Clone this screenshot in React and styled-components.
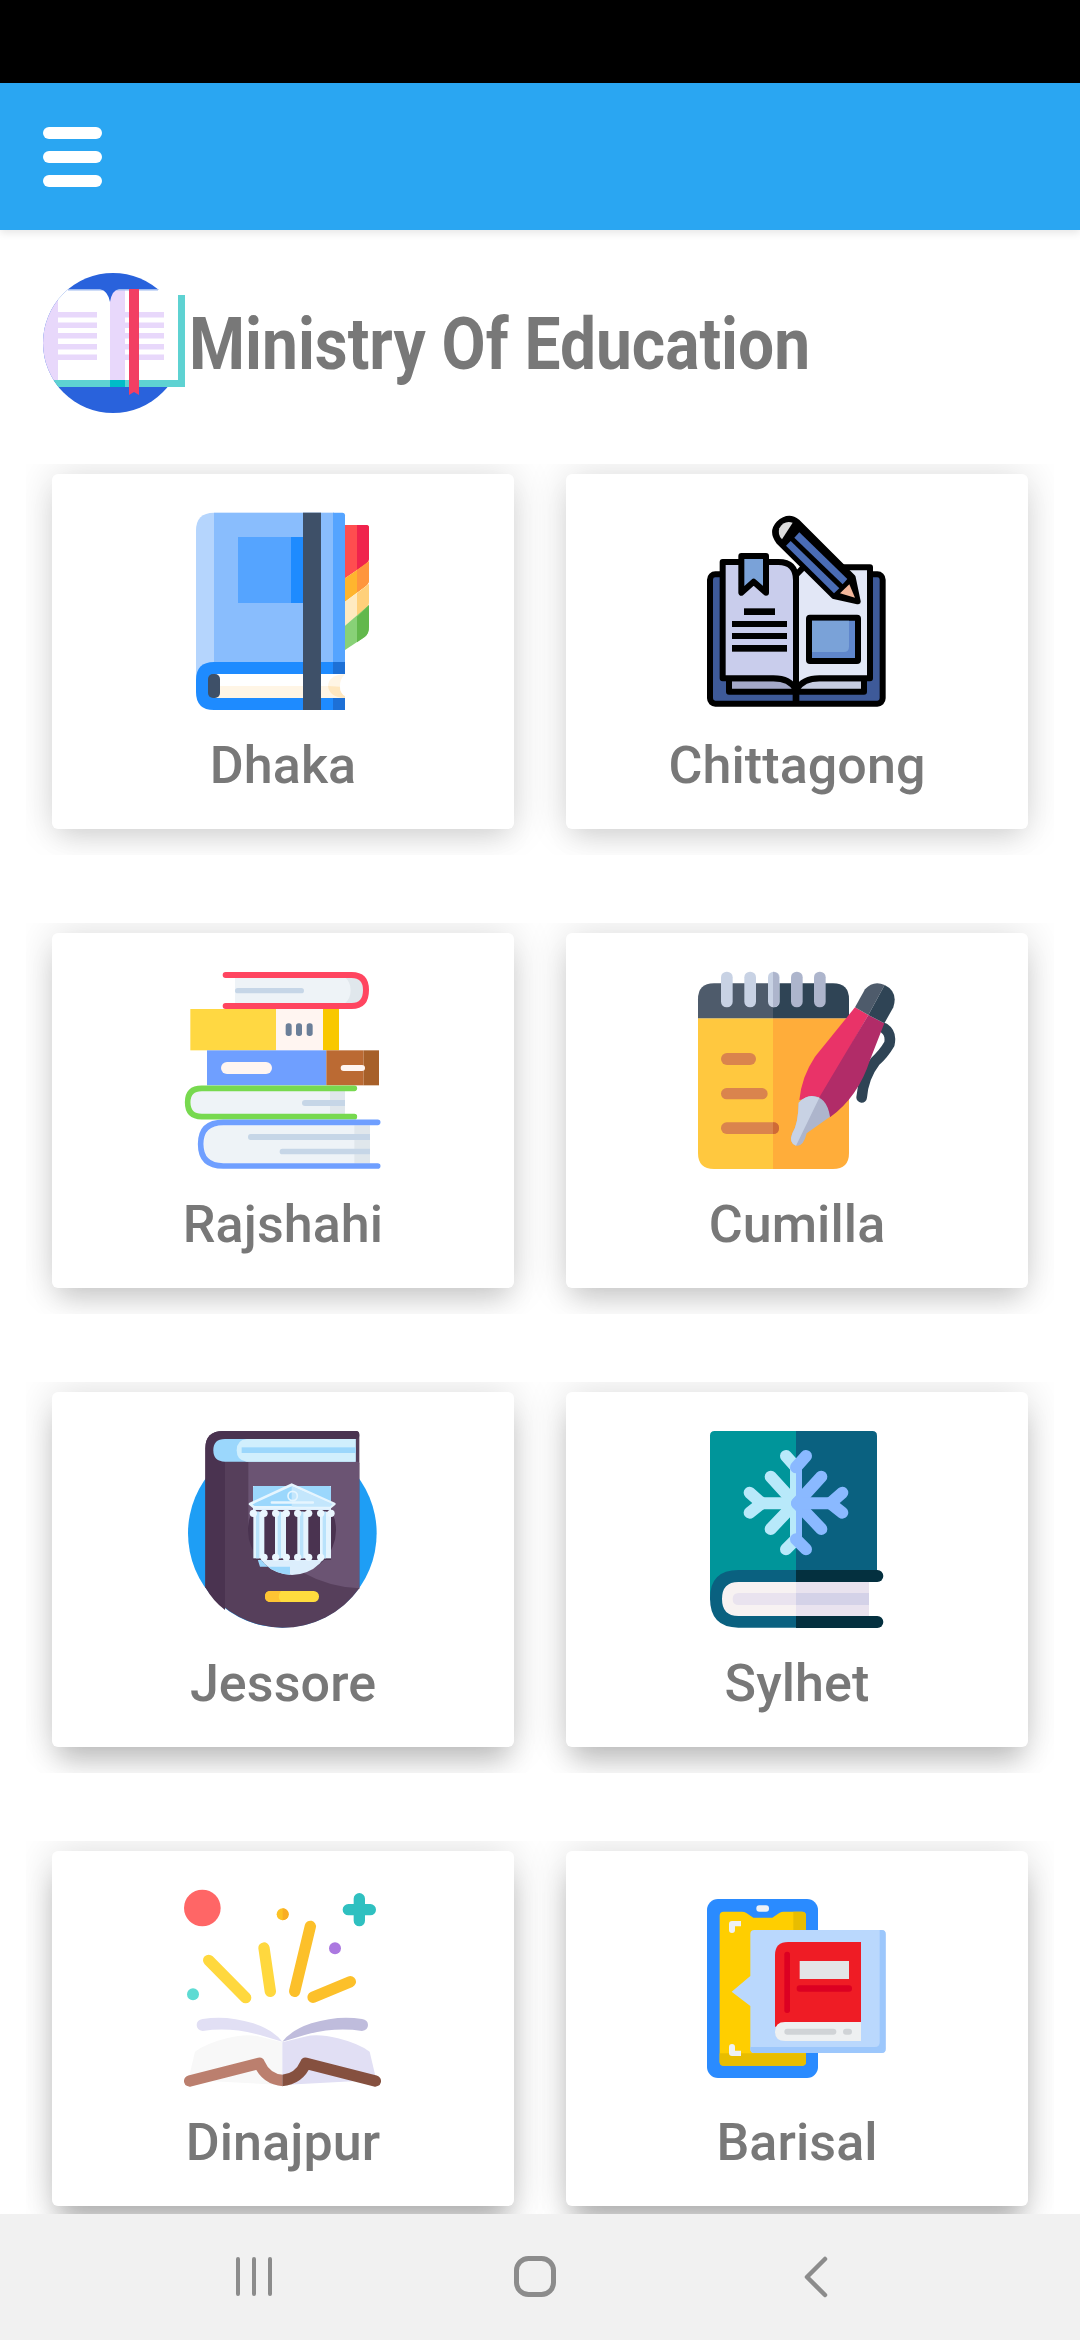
import React from "react";
import styled, { createGlobalStyle } from "styled-components";

const Global = createGlobalStyle`
  html, body { margin: 0; padding: 0; background: #fff; }
  #root { width: 1080px; height: 2340px; }
  * { box-sizing: border-box; }
`;

const Page = styled.div`
  width: 1080px;
  height: 2340px;
  display: flex;
  flex-direction: column;
  overflow: hidden;
  background: #fff;
  font-family: Roboto, "Liberation Sans", sans-serif;
`;
const StatusBar = styled.div`
  height: 83px;
  flex: none;
  background: #000;
`;
const AppBar = styled.header`
  height: 147px;
  flex: none;
  background: #2aa6f2;
  padding-left: 43px;
  display: flex;
  align-items: center;
  position: relative;
  z-index: 1;
  box-shadow: 0 3px 8px rgba(0, 0, 0, 0.1);
`;
const Burger = styled.div`
  display: flex;
  flex-direction: column;
  gap: 12px;
`;
const BurgerBar = styled.span`
  display: block;
  width: 59px;
  height: 12px;
  border-radius: 6px;
  background: #fff;
`;
const Content = styled.main`
  flex: 1;
  min-height: 0;
  overflow: hidden;
`;
const TitleRow = styled.div`
  height: 234px;
  padding: 43px 0 0 43px;
  display: flex;
  align-items: flex-start;
`;
const Logo = styled.svg`
  width: 145px;
  height: 140px;
  flex: none;
  display: block;
`;
const Title = styled.h1`
  margin: 28px 0 0 1px;
  font-size: 73px;
  line-height: 86px;
  font-weight: 700;
  color: #787878;
  white-space: nowrap;
  transform: scaleX(0.877);
  transform-origin: left center;
`;
const Grid = styled.div`
  padding: 0 26px;
  display: flex;
  flex-direction: column;
  gap: 68px;
`;
const Row = styled.div`
  height: 391px;
  padding: 10px 26px 26px;
  display: grid;
  grid-template-columns: 462px 462px;
  column-gap: 52px;
  overflow: hidden;
`;
const Card = styled.div`
  height: 355px;
  border-radius: 6px;
  background: #fff;
  padding-top: 38px;
  display: flex;
  flex-direction: column;
  align-items: center;
  box-shadow: 0 0 40px rgba(0, 0, 0, 0.14),
    0 ${(p) => 14 + p.$row * 3}px 26px -6px rgba(0, 0, 0, ${(p) => 0.1 + p.$row * 0.05});
`;
const Art = styled.svg`
  width: 200px;
  height: 200px;
  flex: none;
  display: block;
`;
const Label = styled.div`
  margin-top: 24px;
  font-size: 52px;
  line-height: 60px;
  font-weight: 500;
  letter-spacing: 0.1px;
  color: #787878;
`;
const NavBar = styled.nav`
  height: 126px;
  flex: none;
  background: #f1f1f1;
  padding-right: 10px;
  display: grid;
  grid-template-columns: repeat(3, 281px);
  justify-content: center;
  align-items: center;
  justify-items: center;
  position: relative;
`;
const NavIcon = styled.svg`
  width: 48px;
  height: 48px;
  display: block;
  fill: none;
  stroke: #8c8c8c;
  stroke-linecap: round;
  stroke-linejoin: round;
`;

const BrandLogo = () => (
  <Logo viewBox="43 273 145 140">
    <defs>
      <clipPath id="logoClip">
        <circle cx="113" cy="343" r="70" />
        <rect x="113" y="273" width="75" height="140" />
      </clipPath>
    </defs>
    <circle cx="113" cy="343" r="70" fill="#2962dc" />
    <g clipPath="url(#logoClip)">
      <rect x="178" y="295" width="7" height="92" fill="#5ed2d2" />
      <rect x="43" y="380" width="142" height="7" fill="#5ed2d2" />
      <rect x="110" y="380" width="15" height="7" fill="#00bcc8" />
      <rect x="43" y="290" width="15" height="90" fill="#e8d8fb" />
      <rect x="58" y="290" width="52" height="90" fill="#fff" />
      <rect x="110" y="290" width="15" height="90" fill="#e8d8fb" />
      <rect x="125" y="290" width="53" height="90" fill="#fff" />
      <rect x="68" y="289" width="90" height="1.5" fill="#9db9f0" />
      <path d="M100 289 H119 Q112 290 110 302 Q108 291 100 289Z" fill="#2962dc" />
      {[312, 322.5, 333, 344, 354.5].map((y) => (
        <g key={y} fill="#e8d8fb">
          <rect x="58" y={y} width="39" height="5.5" />
          <rect x="125" y={y} width="39" height="5.5" />
        </g>
      ))}
      <path d="M129 289 H139 V395 L134 392 L129 395Z" fill="#f23f63" />
    </g>
  </Logo>
);

const Dhaka = () => (
  <Art viewBox="489 156 600 600">
    <path d="M975 355 V195 H1039 Q1047 195 1047 203 V295 Q1047 305 1035 314Z" fill="#ff4d4f" />
    <path d="M1011 195 H1039 Q1047 195 1047 203 V295 Q1047 305 1035 314 L1011 330Z" fill="#f0234d" />
    <path d="M975 355 L1047 305 V360 Q1047 372 1035 380 L975 425Z" fill="#ffb52e" />
    <path d="M1011 330 L1047 303 V360 Q1047 372 1035 380 L1011 398Z" fill="#ff963c" />
    <path d="M975 425 L1047 372 V425 Q1047 438 1035 447 L975 497Z" fill="#ffeac0" />
    <path d="M1011 400 L1047 372 V425 Q1047 438 1035 447 L1011 470Z" fill="#ffd07a" />
    <path d="M975 497 L1047 435 V500 Q1047 520 1035 530 L975 570Z" fill="#88d177" />
    <path d="M1011 470 L1047 435 V500 Q1047 520 1035 530 L1011 547Z" fill="#62b84c" />
    <path d="M582 158 Q528 158 528 212 V690 H582Z" fill="#b5d5fd" />
    <rect x="582" y="158" width="360" height="452" fill="#89bdfd" />
    <path d="M939 158 H967 Q975 158 975 166 V610 H939Z" fill="#55a4ff" />
    <rect x="654" y="231" width="160" height="198" fill="#55a4ff" />
    <rect x="813" y="231" width="37" height="198" fill="#1e8bff" />
    <path d="M975 606 H582 Q528 606 528 660 V696 Q528 750 582 750 H967 Q975 750 975 742Z" fill="#1e8bff" />
    <rect x="939" y="606" width="36" height="144" fill="#1d70d6" />
    <rect x="582" y="642" width="393" height="36" fill="#fff" />
    <rect x="582" y="678" width="393" height="36" fill="#fff5e5" />
    <path d="M975 642 Q924 645 924 680 Q924 712 975 714Z" fill="#fff5e5" />
    <path d="M924 678 Q928 712 975 714 V706 Q960 700 960 680Z" fill="#ffe7bf" />
    <path d="M975 642 Q958 660 960 680 Q960 700 975 708 L990 680Z" fill="#fff" />
    <rect x="564" y="642" width="36" height="72" rx="15" fill="#3e5068" />
    <rect x="849" y="158" width="54" height="592" fill="#3e5068" />
  </Art>
);

const Chittagong = () => (
  <Art viewBox="471 156 600 600">
    <g stroke="#000" strokeWidth="18" strokeLinejoin="round">
      <rect x="510" y="343" width="518" height="388" rx="16" fill="#3e5a99" />
      <path d="M567 655 H768 V695 H567Z" fill="#a4a8c8" />
      <path d="M768 655 H972 V695 H768Z" fill="#c6cce0" />
      <path d="M548 306 H715 Q768 306 768 360 V690 Q750 655 700 655 H548Z" fill="#c9cdec" />
      <path d="M768 690 V345 L790 322 H990 V655 H838 Q790 655 768 690Z" fill="#e2e7f6" />
      <path d="M604 288 H678 V398 L641 365 L604 398Z" fill="#7aa2d8" />
      <rect x="807" y="473" width="147" height="130" rx="3" fill="#5f86cc" />
      <path d="M768 700 V722" strokeWidth="20" strokeLinecap="round" />
    </g>
    <path d="M816 482 H927 V560 Q927 576 911 576 H816Z" fill="#7aa2d8" />
    <g fill="#000">
      <rect x="612" y="445" width="93" height="20" />
      <rect x="576" y="483" width="165" height="18" />
      <rect x="576" y="519" width="165" height="18" />
      <rect x="576" y="555" width="165" height="20" />
    </g>
    <path d="M772 186 L938 352 L953 424 L882 408 L716 244 Q695 215 716 192 Q745 165 772 186Z" fill="#000" stroke="#000" strokeWidth="18" strokeLinejoin="round" />
    <path d="M758 188 Q732 180 718 205 Q712 225 726 238Z" fill="#dcdcdc" />
    <path d="M778 217 L922 357 L908 373 L763 233Z" fill="#4a6cb5" />
    <path d="M752 243 L898 385 L882 400 L738 257Z" fill="#4a6cb5" />
    <path d="M928 373 L945 413 L900 400Z" fill="#f4b79b" />
  </Art>
);

const Rajshahi = () => (
  <Art viewBox="489 153 600 600">
    <rect x="645" y="172" width="385" height="78" rx="36" fill="#eef3f7" />
    <rect x="645" y="172" width="60" height="78" fill="#eef3f7" />
    <path d="M975 172 H995 Q1030 172 1030 211 Q1030 250 995 250 H975 Q992 235 992 211 Q992 187 975 172Z" fill="#e0e7ec" />
    <rect x="645" y="204" width="207" height="16" rx="8" fill="#c6d6e7" />
    <path d="M617 165 H995 Q1038 165 1038 210 Q1038 258 995 258 H617" fill="none" stroke="#ff4560" strokeWidth="18" strokeLinecap="round" />
    <rect x="511" y="267" width="257" height="124" fill="#ffd842" />
    <rect x="768" y="267" width="141" height="124" fill="#fff5f1" />
    <rect x="909" y="267" width="48" height="124" fill="#f9c800" />
    {[797, 828, 860].map((x) => (
      <rect key={x} x={x} y="310" width="18" height="38" rx="8" fill="#6b7f99" />
    ))}
    <rect x="561" y="391" width="358" height="105" fill="#6f9fff" />
    <rect x="603" y="426" width="153" height="36" rx="18" fill="#fff5f1" />
    <rect x="919" y="391" width="112" height="105" fill="#bb6a33" />
    <rect x="1031" y="391" width="46" height="105" fill="#a76029" />
    <rect x="962" y="435" width="73" height="18" rx="9" fill="#fff5f1" />
    <path d="M975 513 H545 Q512 513 512 547 Q512 582 545 582 H975Z" fill="#eef3f7" />
    <rect x="930" y="513" width="45" height="69" fill="#e0e7ec" />
    <path d="M975 540 H855 Q846 540 846 549 Q846 558 855 558 H975Z" fill="#c6d6e7" />
    <path d="M1003 505 H545 Q503 505 503 547 Q503 590 545 590 H1003" fill="none" stroke="#77d94f" strokeWidth="17" strokeLinecap="round" />
    <path d="M1050 616 H610 Q552 616 552 672 Q552 730 610 730 H1050Z" fill="#eef3f7" />
    <rect x="1003" y="616" width="47" height="114" fill="#e0e7ec" />
    <path d="M1050 642 H692 Q684 642 684 651 Q684 660 692 660 H1050Z" fill="#c6d6e7" />
    <path d="M1050 686 H787 Q779 686 779 695 Q779 703 787 703 H1050Z" fill="#c6d6e7" />
    <path d="M1073 607 H610 Q542 607 542 672 Q542 738 610 738 H1073" fill="none" stroke="#6f9fff" strokeWidth="17" strokeLinecap="round" />
  </Art>
);

const Cumilla = () => (
  <Art viewBox="471 153 600 600">
    <path d="M474 295 H699 V747 H522 Q474 747 474 699Z" fill="#ffc83f" />
    <path d="M699 295 H927 V699 Q927 747 879 747 H699Z" fill="#ffad3a" />
    <path d="M474 295 V238 Q474 190 522 190 H699 V295Z" fill="#4e5b6b" />
    <path d="M699 190 H879 Q927 190 927 238 V295 H699Z" fill="#2f4455" />
    {[543, 613, 684].map((x) => (
      <rect key={x} x={x} y="155" width="35" height="107" rx="17" fill="#c8d2e4" />
    ))}
    {[753, 822].map((x) => (
      <rect key={x} x={x} y="155" width="35" height="107" rx="17" fill="#adb5cc" />
    ))}
    <path d="M699 155.5 Q717 158 717 172 V245 Q717 260 699 262Z" fill="#adb5cc" />
    <rect x="543" y="399" width="105" height="36" rx="18" fill="#da844d" />
    <rect x="543" y="504" width="140" height="34" rx="17" fill="#da844d" />
    <rect x="543" y="607" width="174" height="35" rx="17" fill="#da844d" />
    <path d="M699 607 Q717 607 717 624 Q717 642 699 642Z" fill="#cf6a36" />
    <path d="M1033 325 Q1055 340 1048 372 Q1032 400 1005 425 Q970 470 965 532" fill="none" stroke="#2f4455" strokeWidth="32" strokeLinecap="round" />
    <path d="M945 262 L985 285 L845 530 L778 540 Q785 470 825 410Z" fill="#e93368" />
    <path d="M985 285 L1033 310 L990 420 Q955 530 870 592 L830 545Z" fill="#b12c68" />
    <path d="M776 548 Q795 528 815 528 Q860 528 870 590 L800 640 Q790 680 770 677 Q745 670 757 640 Q775 610 776 548Z" fill="#adb5cc" />
    <path d="M776 548 Q795 528 815 528 L838 533 L768 677 Q745 670 757 640 Q775 610 776 548Z" fill="#c8d2e4" />
    <path d="M945 262 L975 208 Q1000 180 1034 195 L985 285Z" fill="#4e5b6b" />
    <path d="M985 285 L1034 195 Q1075 215 1060 262 L1033 310Z" fill="#2f4455" />
  </Art>
);

const Jessore = () => (
  <Art viewBox="489 150 600 600">
    <circle cx="787" cy="460" r="283" fill="#1e9ef5" />
    <path d="M556 205 Q556 153 610 153 H1008 Q1018 153 1018 165 V625 A283 283 0 0 1 556 622Z" fill="#563f5b" />
    <path d="M556 205 Q556 153 610 153 H640 V180 H615 V690 Q580 665 556 622Z" fill="#4a3350" />
    <path d="M615 153 H1008 Q1018 153 1018 165 Q1018 177 1008 177 H615Z" fill="#4a3350" />
    <path d="M685 245 H1014 Q1018 245 1018 250 V625 Q925 620 850 578 L700 460 L685 440Z" fill="#6b5473" />
    <path d="M615 177 Q580 177 580 211 Q580 245 615 245 H1007 V177Z" fill="#9bd7fc" />
    <path d="M680 177 Q650 180 650 211 Q650 242 680 245 H1007 V177Z" fill="#d0effd" />
    <rect x="665" y="202" width="342" height="17" fill="#9bd7fc" />
    <circle cx="816" cy="450" r="132" fill="#4a3350" />
    <path d="M699 318 H933 V470 A117 115 0 0 1 699 470Z" fill="#dceefc" />
    <path d="M699 470 A117 115 0 0 0 816 585 H810 V560 H720 Q705 520 699 470Z" fill="#9bd7fc" />
    <rect x="699" y="318" width="234" height="60" rx="5" fill="#9bd7fc" />
    <rect x="699" y="390" width="234" height="150" fill="#4a3350" />
    {[700, 765, 832, 900].map((x) => (
      <g key={x}>
        <rect x={x} y="395" width="33" height="140" fill="#e4f4fe" />
        <rect x={x + 8} y="395" width="10" height="140" fill="#b9e2fb" />
      </g>
    ))}
    {[700, 732, 767, 799, 833, 866, 902, 933].map((x) => (
      <circle key={x} cx={x} cy="400" r="11" fill="#eaf6fe" />
    ))}
    {[732, 767, 799, 833, 866, 902].map((x) => (
      <circle key={x} cx={x} cy="532" r="11" fill="#eaf6fe" />
    ))}
    <path d="M690 372 L815 314 L943 372 L930 382 H702Z" fill="#9bd7fc" stroke="#e6f5fe" strokeWidth="8" strokeLinejoin="round" />
    <path d="M815 318 L938 372 L930 380 H815Z" fill="#c3e6fc" />
    <circle cx="818" cy="348" r="14" fill="none" stroke="#e6f5fe" strokeWidth="5" />
    <rect x="752" y="364" width="130" height="7" rx="3" fill="#e6f5fe" />
    <rect x="735" y="633" width="162" height="33" rx="16" fill="#ffdc3e" />
    <path d="M783 633 H751 Q735 633 735 649 Q735 666 751 666 H783 Q770 650 783 633Z" fill="#ffc433" />
  </Art>
);

const Flake = ({ side, color }) => {
  const m = (x) => (side === "l" ? x : 1536 - x);
  return (
    <g stroke={color} strokeWidth="36" strokeLinecap="round" fill="none">
      <path d={`M${m(765)} 370 L${m(692)} 290`} />
      <path d={`M${m(765)} 370 L${m(692)} 447`} />
      <path d={`M${m(665)} 370 L${m(629)} 338`} />
      <path d={`M${m(665)} 370 L${m(629)} 398`} />
      <path d={`M${m(768)} 262 L${m(738)} 228`} />
      <path d={`M${m(768)} 478 L${m(738)} 508`} />
      <path d={`M${m(768)} 370 H${m(665)}`} strokeLinecap="butt" />
      <path d={`M${m(759)} 240 V500`} strokeWidth="18" strokeLinecap="butt" />
    </g>
  );
};

const Sylhet = () => (
  <Art viewBox="471 150 600 600">
    <path d="M768 153 H524 Q510 153 510 167 V660 L600 700 H768Z" fill="#00959a" />
    <path d="M768 153 H997 Q1011 153 1011 167 V590 H768Z" fill="#0a6180" />
    <Flake side="l" color="#b8e9fa" />
    <Flake side="r" color="#8ab9ff" />
    <rect x="546" y="606" width="222" height="102" fill="#f7f2f2" />
    <rect x="768" y="606" width="219" height="102" fill="#e9e3ef" />
    <path d="M768 639 H596 Q578 639 578 657 Q578 675 596 675 H768Z" fill="#e9e3ef" />
    <rect x="768" y="639" width="219" height="36" fill="#d4d2e8" />
    <path d="M768 570 H595 Q510 570 510 655 Q510 743 595 743 H768 V708 H595 Q546 708 546 657 Q546 606 595 606 H768Z" fill="#0a6180" />
    <path d="M768 570 H1012 A18 18 0 0 1 1012 606 H768Z" fill="#04303f" />
    <path d="M768 708 H1012 A18 18 0 0 1 1012 744 H768Z" fill="#04303f" />
  </Art>
);

const Dinajpur = () => (
  <Art viewBox="489 147 600 600">
    <defs>
      <clipPath id="dinajpurLeft">
        <rect x="480" y="640" width="307" height="110" />
      </clipPath>
      <clipPath id="dinajpurRight">
        <rect x="787" y="640" width="307" height="110" />
      </clipPath>
    </defs>
    <circle cx="547" cy="204" r="55" fill="#ff6666" />
    <circle cx="788" cy="223" r="18" fill="#fcc224" />
    <path d="M788 205 A18 18 0 0 1 788 241Z" fill="#f9ad24" />
    <path d="M1018 176 V242 M985 209 H1051" stroke="#2fc0c0" strokeWidth="34" strokeLinecap="round" />
    <circle cx="945" cy="325" r="18" fill="#ab78e0" />
    <circle cx="519" cy="463" r="18" fill="#5edbd3" />
    <g strokeWidth="34" strokeLinecap="round">
      <path d="M566 361 L677 473 M732 324 L751 454" stroke="#ffd83e" />
      <path d="M871 259 L824 454 M991 425 L879 472" stroke="#fcc02a" />
    </g>
    <path d="M548 537 Q620 525 700 550 Q760 570 787 605 L720 585 Q630 560 548 573 Q530 570 530 555 Q530 540 548 537Z" fill="#e1dff4" />
    <path d="M1026 537 Q954 525 874 550 Q814 570 787 605 L854 585 Q944 560 1026 573 Q1044 570 1044 555 Q1044 540 1026 537Z" fill="#bfbcdc" />
    <path d="M787 607 L720 590 Q680 580 620 595 Q560 610 525 635 L505 720 L787 735Z" fill="#f8f8f8" />
    <path d="M787 607 L854 590 Q894 580 954 595 Q1014 610 1049 635 L1069 720 L787 735Z" fill="#e1dff4" />
    <g clipPath="url(#dinajpurLeft)">
      <path d="M509 723 L718 670 Q740 722 800 722" fill="none" stroke="#bb7f6e" strokeWidth="34" strokeLinecap="round" strokeLinejoin="round" />
    </g>
    <g clipPath="url(#dinajpurRight)">
      <path d="M1066 723 L857 670 Q835 722 774 722" fill="none" stroke="#85503f" strokeWidth="34" strokeLinecap="round" strokeLinejoin="round" />
    </g>
  </Art>
);

const Barisal = () => (
  <Art viewBox="471 147 600 600">
    <rect x="501" y="177" width="333" height="537" rx="33" fill="#2a8bff" />
    <rect x="539" y="215" width="259" height="462" rx="12" fill="#ffce00" />
    <path d="M539 640 H798 V665 Q798 677 786 677 H551 Q539 677 539 665Z" fill="#e8bd00" />
    <path d="M760 215 H786 Q798 215 798 227 V280 H760Z" fill="#e8bd00" />
    <path d="M606 213 Q622 218 640 233 H697 Q715 218 731 213Z" fill="#2a8bff" />
    <rect x="649" y="196" width="38" height="19" rx="9" fill="#eef1f5" />
    <path d="M567 252 Q567 243 576 243 H603 V259 H585 V270 Q585 279 576 279 Q567 279 567 270Z" fill="#eef1f5" />
    <path d="M567 639 Q567 648 576 648 H603 V632 H585 V621 Q585 612 576 612 Q567 612 567 621Z" fill="#eef1f5" />
    <path d="M643 270 H1025 Q1037 270 1037 282 V627 Q1037 639 1025 639 H643 Q631 639 631 627 V498 L575 455 L631 408 V282 Q631 270 643 270Z" fill="#bad8fd" />
    <path d="M1019 270 H1025 Q1037 270 1037 282 V627 Q1037 639 1025 639 H643 Q631 639 631 627 V621 H1005 Q1019 621 1019 607Z" fill="#9cc7fc" />
    <path d="M705 345 Q705 306 745 306 H963 V560 H705Z" fill="#ef1c25" />
    <path d="M705 575 Q705 546 735 546 H963 V603 H735 Q705 603 705 575Z" fill="#eef0f1" />
    <rect x="733" y="566" width="156" height="18" rx="9" fill="#d0d3d6" />
    <rect x="909" y="566" width="27" height="18" rx="9" fill="#d0d3d6" />
    <rect x="733" y="335" width="17" height="184" rx="8" fill="#dc0022" />
    <rect x="770" y="436" width="166" height="19" rx="9" fill="#dc0022" />
    <rect x="779" y="363" width="148" height="54" fill="#e3e4e6" />
  </Art>
);

const rows = [
  [{ name: "Dhaka", Icon: Dhaka }, { name: "Chittagong", Icon: Chittagong }],
  [{ name: "Rajshahi", Icon: Rajshahi }, { name: "Cumilla", Icon: Cumilla }],
  [{ name: "Jessore", Icon: Jessore }, { name: "Sylhet", Icon: Sylhet }],
  [{ name: "Dinajpur", Icon: Dinajpur }, { name: "Barisal", Icon: Barisal }],
];

export default function App() {
  return (
    <Page>
      <Global />
      <StatusBar />
      <AppBar>
        <Burger>
          <BurgerBar />
          <BurgerBar />
          <BurgerBar />
        </Burger>
      </AppBar>
      <Content>
        <TitleRow>
          <BrandLogo />
          <Title>Ministry Of Education</Title>
        </TitleRow>
        <Grid>
          {rows.map((cards, i) => (
            <Row key={i}>
              {cards.map(({ name, Icon }) => (
                <Card key={name} $row={i}>
                  <Icon />
                  <Label>{name}</Label>
                </Card>
              ))}
            </Row>
          ))}
        </Grid>
      </Content>
      <NavBar>
        <NavIcon viewBox="230 2254 48 48">
          <path d="M238 2260 V2295 M254 2260 V2295 M270 2260 V2295" strokeWidth="4" />
        </NavIcon>
        <NavIcon viewBox="511 2254 48 48">
          <rect x="516.5" y="2259.5" width="37" height="36" rx="12" strokeWidth="5" />
        </NavIcon>
        <NavIcon viewBox="792 2254 48 48">
          <path d="M825 2260 L807 2278 L825 2296" strokeWidth="4.5" />
        </NavIcon>
      </NavBar>
    </Page>
  );
}
